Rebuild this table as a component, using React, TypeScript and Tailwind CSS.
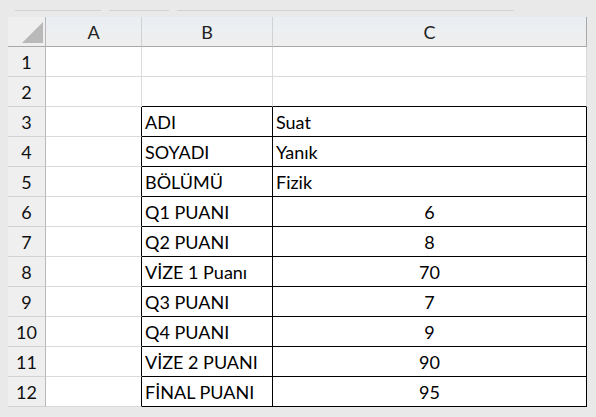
import React from "react";

type Row = { b?: string; c?: string; num?: boolean };

const rows: Row[] = [
  {},
  {},
  { b: "ADI", c: "Suat" },
  { b: "SOYADI", c: "Yanık" },
  { b: "BÖLÜMÜ", c: "Fizik" },
  { b: "Q1 PUANI", c: "6", num: true },
  { b: "Q2 PUANI", c: "8", num: true },
  { b: "VİZE 1 Puanı", c: "70", num: true },
  { b: "Q3 PUANI", c: "7", num: true },
  { b: "Q4 PUANI", c: "9", num: true },
  { b: "VİZE 2 PUANI", c: "90", num: true },
  { b: "FİNAL PUANI", c: "95", num: true },
];

export default function App() {
  return (
    <div
      className="w-[596px] h-[417px] bg-[#e9e9e9] overflow-hidden text-black"
      style={{ fontFamily: "Lato, 'Noto Sans', sans-serif" }}
    >
      {/* faint toolbar remnant */}
      <div className="h-[17px] pl-[15px] pr-[82px] pt-[10px] flex gap-[8px]">
        <div className="w-[86px] border-t border-[#d2d2d2]" />
        <div className="w-[60px] border-t border-[#d2d2d2]" />
        <div className="flex-1 border-t border-[#d2d2d2]" />
      </div>

      <div className="ml-[8px] w-[579px] grid grid-cols-[38px_96px_131px_314px] grid-rows-[30px_repeat(12,30px)] text-[18px] leading-none">
        {/* header row */}
        <div className="relative bg-[#efefef] border-r border-b border-r-[#b8b8b8] border-b-[#a8a8a8]">
          <svg className="absolute left-0 top-0" width="38" height="30">
            <polygon points="14,26 35,5 35,26" fill="#b9b9b9" />
          </svg>
        </div>
        {["A", "B", "C"].map((l, i) => (
          <div
            key={l}
            className={`bg-gradient-to-b from-[#eaeef2] to-[#efefef] border-b border-b-[#a8a8a8] border-r flex items-center justify-center text-[#222] ${
              i === 2 ? "border-r-[#a8a8a8]" : "border-r-[#d2d2d2]"
            }`}
          >
            {l}
          </div>
        ))}

        {rows.map((r, idx) => {
          const n = idx + 1;
          const inTable = n >= 3;
          const topOfTable = n >= 2;
          return (
            <React.Fragment key={n}>
              <div className="bg-[#efefef] border-r border-b border-r-[#b8b8b8] border-b-[#d2d2d2] flex items-center justify-center text-[#111]">
                {n}
              </div>
              <div
                className={`bg-white border-r border-b border-b-[#dadada] ${
                  inTable ? "border-r-black" : "border-r-[#dadada]"
                }`}
              />
              <div
                className={`bg-white border-r border-b flex items-center pl-[3px] whitespace-nowrap ${
                  inTable ? "border-r-black" : "border-r-[#dadada]"
                } ${topOfTable ? "border-b-black" : "border-b-[#dadada]"}`}
              >
                {r.b}
              </div>
              <div
                className={`bg-white border-r border-b flex items-center whitespace-nowrap ${
                  r.num ? "justify-center" : "pl-[3px]"
                } ${inTable ? "border-r-black" : "border-r-[#dadada]"} ${
                  topOfTable ? "border-b-black" : "border-b-[#dadada]"
                }`}
              >
                {r.c}
              </div>
            </React.Fragment>
          );
        })}
      </div>
    </div>
  );
}
